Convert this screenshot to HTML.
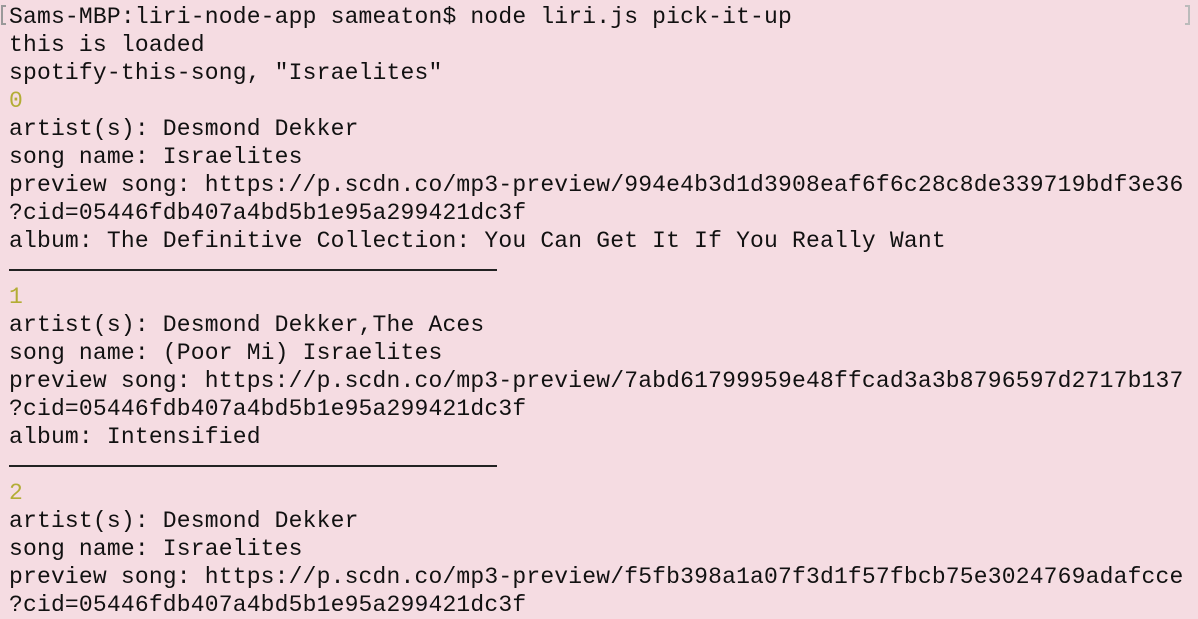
<!DOCTYPE html>
<html><head><style>
html,body{margin:0;padding:0;background:#f5dce2;width:1198px;height:602px;overflow:hidden}
pre{margin:0;position:absolute;left:9px;top:3px;font-family:"Liberation Mono",monospace;font-size:23px;line-height:28px;letter-spacing:0.18px;color:#111;white-space:pre}
.y{color:#b3ad35}
.d{display:inline-block;width:488px;border-top:2px solid #222;vertical-align:middle;margin-top:2px}
.br{position:absolute;left:1px;top:5px;width:5px;height:20px;border:2px solid #999;border-right:none;box-sizing:border-box}
.br2{position:absolute;left:1185px;top:5px;width:5px;height:20px;border:2px solid #bbb;border-left:none;box-sizing:border-box}
</style></head><body>
<div class="br"></div><div class="br2"></div>
<pre>Sams-MBP:liri-node-app sameaton$ node liri.js pick-it-up
this is loaded
spotify-this-song, "Israelites"
<span class="y">0</span>
artist(s): Desmond Dekker
song name: Israelites
preview song: https://p.scdn.co/mp3-preview/994e4b3d1d3908eaf6f6c28c8de339719bdf3e36
?cid=05446fdb407a4bd5b1e95a299421dc3f
album: The Definitive Collection: You Can Get It If You Really Want
<span class="d"></span>
<span class="y">1</span>
artist(s): Desmond Dekker,The Aces
song name: (Poor Mi) Israelites
preview song: https://p.scdn.co/mp3-preview/7abd61799959e48ffcad3a3b8796597d2717b137
?cid=05446fdb407a4bd5b1e95a299421dc3f
album: Intensified
<span class="d"></span>
<span class="y">2</span>
artist(s): Desmond Dekker
song name: Israelites
preview song: https://p.scdn.co/mp3-preview/f5fb398a1a07f3d1f57fbcb75e3024769adafcce
?cid=05446fdb407a4bd5b1e95a299421dc3f</pre>
</body></html>
